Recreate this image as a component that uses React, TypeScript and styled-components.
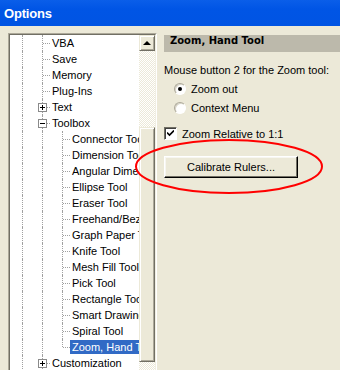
import styled, { createGlobalStyle } from 'styled-components';

const GlobalStyle = createGlobalStyle`
  html,
  body {
    margin: 0;
    padding: 0;
  }

  body {
    background: #ece9d8;
    color: #000;
    font-family: 'Liberation Sans', Arial, sans-serif;
    font-size: 11px;
  }
`;

const Window = styled.div`
  position: relative;
  width: 340px;
  height: 370px;
  overflow: hidden;
  display: flex;
  flex-direction: column;
  background: #ece9d8;
`;

const TitleBar = styled.div`
  flex: none;
  height: 26px;
  display: flex;
  align-items: center;
  padding-left: 4px;
  background: linear-gradient(#0a5ee9, #0055e5 35%, #0054e3);
  color: #fff;
  font: bold 13px 'Liberation Sans', Arial, sans-serif;
  letter-spacing: -0.2px;
`;

const Body = styled.div`
  flex: 1;
  min-height: 0;
  display: flex;
  align-items: flex-start;
  gap: 7px;
  padding: 7px 0 0 8px;
`;

// sunken 2px frame round the tree
const TreeFrame = styled.div`
  flex: none;
  width: 149px;
  height: 400px;
  box-sizing: border-box;
  border: 1px solid;
  border-color: #aca899 #fff #fff #aca899;
`;

const TreeInner = styled.div`
  height: 100%;
  box-sizing: border-box;
  display: flex;
  border: 1px solid;
  border-color: #716f64 #f1efe2 #f1efe2 #716f64;
`;

const TreeList = styled.div`
  flex: 1;
  min-width: 0;
  overflow: hidden;
  background: #fff;
`;

const Row = styled.div`
  height: 16px;
  display: flex;
  align-items: center;
  padding-left: 2px;
`;

type GuideKind = 'pipe' | 'tee' | 'ell';

const Guide = styled.span<{ $kind: GuideKind; $stub?: boolean }>`
  position: relative;
  flex: none;
  align-self: stretch;
  width: ${(p) => (p.$stub ? 18 : 20)}px;

  &::before {
    content: '';
    position: absolute;
    left: 10px;
    top: 0;
    bottom: ${(p) => (p.$kind === 'ell' ? '8px' : '0')};
    border-left: 1px dotted #a0a0a0;
  }

  &::after {
    content: '';
    display: ${(p) => (p.$kind === 'pipe' ? 'none' : 'block')};
    position: absolute;
    left: 11px;
    right: 0;
    top: 8px;
    border-top: 1px dotted #a0a0a0;
  }
`;

const Expander = styled.span<{ $open: boolean }>`
  position: absolute;
  z-index: 1;
  left: 6px;
  top: 4px;
  width: 9px;
  height: 9px;
  box-sizing: border-box;
  border: 1px solid #8a8a8a;
  background: #fff;

  &::before {
    content: '';
    position: absolute;
    left: 1px;
    top: 3px;
    width: 5px;
    height: 1px;
    background: #000;
  }

  &::after {
    content: '';
    display: ${(p) => (p.$open ? 'none' : 'block')};
    position: absolute;
    left: 3px;
    top: 1px;
    width: 1px;
    height: 5px;
    background: #000;
  }
`;

const Label = styled.span<{ $selected?: boolean }>`
  flex: none;
  height: 14px;
  line-height: 14px;
  padding: 0 2px;
  white-space: nowrap;
  background: ${(p) => (p.$selected ? '#316ac5' : 'transparent')};
  color: ${(p) => (p.$selected ? '#fff' : '#000')};
`;

// classic scroll bar
const ScrollBar = styled.div`
  flex: none;
  width: 16px;
  display: flex;
  flex-direction: column;
`;

const Raised = styled.div<{ $h: number }>`
  flex: none;
  height: ${(p) => p.$h}px;
  box-sizing: border-box;
  display: flex;
  align-items: center;
  justify-content: center;
  border: 1px solid;
  border-color: #ece9d8 #716f64 #716f64 #ece9d8;
  box-shadow: inset 1px 1px #fff, inset -1px -1px #aca899;
  background: #ece9d8;
`;

const Track = styled.div<{ $h?: number }>`
  flex: ${(p) => (p.$h ? `none` : '1')};
  height: ${(p) => (p.$h ? `${p.$h}px` : 'auto')};
  background-color: #fff;
  background-image: repeating-conic-gradient(#ece9d8 0 25%, #fff 0 50%);
  background-size: 2px 2px;
`;

const UpArrow = styled.span`
  width: 0;
  height: 0;
  margin-top: -1px;
  border-left: 4px solid transparent;
  border-right: 4px solid transparent;
  border-bottom: 4px solid #000;
`;

// right side
const Panel = styled.div`
  flex: 1;
  min-width: 0;
  display: flex;
  flex-direction: column;
  align-items: flex-start;
`;

const PanelHeader = styled.div`
  align-self: stretch;
  margin-top: 2px;
  height: 17px;
  line-height: 17px;
  padding-left: 6px;
  background: #bcb9ab;
  font: bold 10px 'DejaVu Sans', Verdana, sans-serif;
  white-space: nowrap;
`;

const Prompt = styled.div`
  margin-top: 11px;
  line-height: 14px;
  white-space: nowrap;
`;

const RadioList = styled.div`
  margin-top: 2px;
  padding-left: 10px;
  display: flex;
  flex-direction: column;
`;

const OptionRow = styled.label<{ $h: number; $gap: number }>`
  height: ${(p) => p.$h}px;
  display: flex;
  align-items: center;
  gap: ${(p) => p.$gap}px;
  white-space: nowrap;
`;

const RadioDot = styled.span<{ $checked?: boolean }>`
  position: relative;
  flex: none;
  width: 12px;
  height: 12px;
  box-sizing: border-box;
  border-radius: 50%;
  border: 1px solid;
  border-color: #aca899 #fff #fff #aca899;
  box-shadow: inset 1px 1px #d8d5c7;
  background: #fff;

  &::after {
    content: '';
    display: ${(p) => (p.$checked ? 'block' : 'none')};
    position: absolute;
    left: 3px;
    top: 3px;
    width: 4px;
    height: 4px;
    border-radius: 50%;
    background: #000;
  }
`;

const CheckBox = styled.span`
  flex: none;
  width: 13px;
  height: 13px;
  box-sizing: border-box;
  display: flex;
  align-items: center;
  justify-content: center;
  border: 1px solid;
  border-color: #716f64 #fff #fff #716f64;
  box-shadow: inset 1px 1px #404040;
  background: #fff;
`;

const CheckRow = styled(OptionRow)`
  margin-top: 8px;
`;

const PushButton = styled.button`
  margin-top: 14px;
  width: 134px;
  height: 22px;
  padding: 0;
  box-sizing: border-box;
  border: 1px solid;
  border-color: #fff #000 #000 #fff;
  box-shadow: inset -1px -1px #716f64, inset 1px 1px #f7f6f1;
  background: #ece9d8;
  color: #000;
  font: 11px 'Liberation Sans', Arial, sans-serif;
`;

// red hand-drawn ring lying over the screenshot
const Annotation = styled.svg`
  position: absolute;
  left: 0;
  top: 0;
  pointer-events: none;
`;

type TreeRow = {
  label: string;
  guides: GuideKind[];
  expander?: 'plus' | 'minus';
  selected?: boolean;
};

const tools = [
  'Connector Tool',
  'Dimension Tool',
  'Angular Dimension Tool',
  'Ellipse Tool',
  'Eraser Tool',
  'Freehand/Bezier Tool',
  'Graph Paper Tool',
  'Knife Tool',
  'Mesh Fill Tool',
  'Pick Tool',
  'Rectangle Tool',
  'Smart Drawing Tool',
  'Spiral Tool',
  'Zoom, Hand Tool',
];

const rows: TreeRow[] = [
  { label: 'VBA', guides: ['pipe', 'tee'] },
  { label: 'Save', guides: ['pipe', 'tee'] },
  { label: 'Memory', guides: ['pipe', 'tee'] },
  { label: 'Plug-Ins', guides: ['pipe', 'tee'] },
  { label: 'Text', guides: ['pipe', 'tee'], expander: 'plus' },
  { label: 'Toolbox', guides: ['pipe', 'tee'], expander: 'minus' },
  ...tools.map((label, i) => ({
    label,
    guides: ['pipe', 'pipe', i === tools.length - 1 ? 'ell' : 'tee'] as GuideKind[],
    selected: i === tools.length - 1,
  })),
  { label: 'Customization', guides: ['pipe', 'tee'], expander: 'plus' },
  { label: 'Document', guides: ['pipe', 'tee'], expander: 'plus' },
];

function App() {
  return (
    <Window>
      <GlobalStyle />
      <TitleBar>Options</TitleBar>

      <Body>
        {/* tree */}
        <TreeFrame>
          <TreeInner>
            <TreeList>
              {rows.map((row) => (
                <Row key={row.label}>
                  {row.guides.map((kind, i) => {
                    const last = i === row.guides.length - 1;
                    return (
                      <Guide key={i} $kind={kind} $stub={last}>
                        {last && row.expander && <Expander $open={row.expander === 'minus'} />}
                      </Guide>
                    );
                  })}
                  <Label $selected={row.selected}>{row.label}</Label>
                </Row>
              ))}
            </TreeList>

            <ScrollBar>
              <Raised $h={16}>
                <UpArrow />
              </Raised>
              <Track $h={76} />
              <Raised $h={235} />
              <Track />
            </ScrollBar>
          </TreeInner>
        </TreeFrame>

        {/* page */}
        <Panel>
          <PanelHeader>Zoom, Hand Tool</PanelHeader>
          <Prompt>Mouse button 2 for the Zoom tool:</Prompt>
          <RadioList>
            <OptionRow $h={19} $gap={5}>
              <RadioDot $checked />
              Zoom out
            </OptionRow>
            <OptionRow $h={19} $gap={5}>
              <RadioDot />
              Context Menu
            </OptionRow>
          </RadioList>
          <CheckRow $h={17} $gap={5}>
            <CheckBox>
              <svg width="7" height="7" viewBox="0 0 7 7">
                <path d="M0 2.5 L2.5 5 L7 0.5" fill="none" stroke="#000" strokeWidth="1.6" />
              </svg>
            </CheckBox>
            Zoom Relative to 1:1
          </CheckRow>
          <PushButton>Calibrate Rulers...</PushButton>
        </Panel>
      </Body>

      <Annotation width="340" height="370" viewBox="0 0 340 370">
        <ellipse cx="229" cy="166.5" rx="93" ry="26.5" fill="none" stroke="#f00" strokeWidth="2" />
      </Annotation>
    </Window>
  );
}

export default App;
